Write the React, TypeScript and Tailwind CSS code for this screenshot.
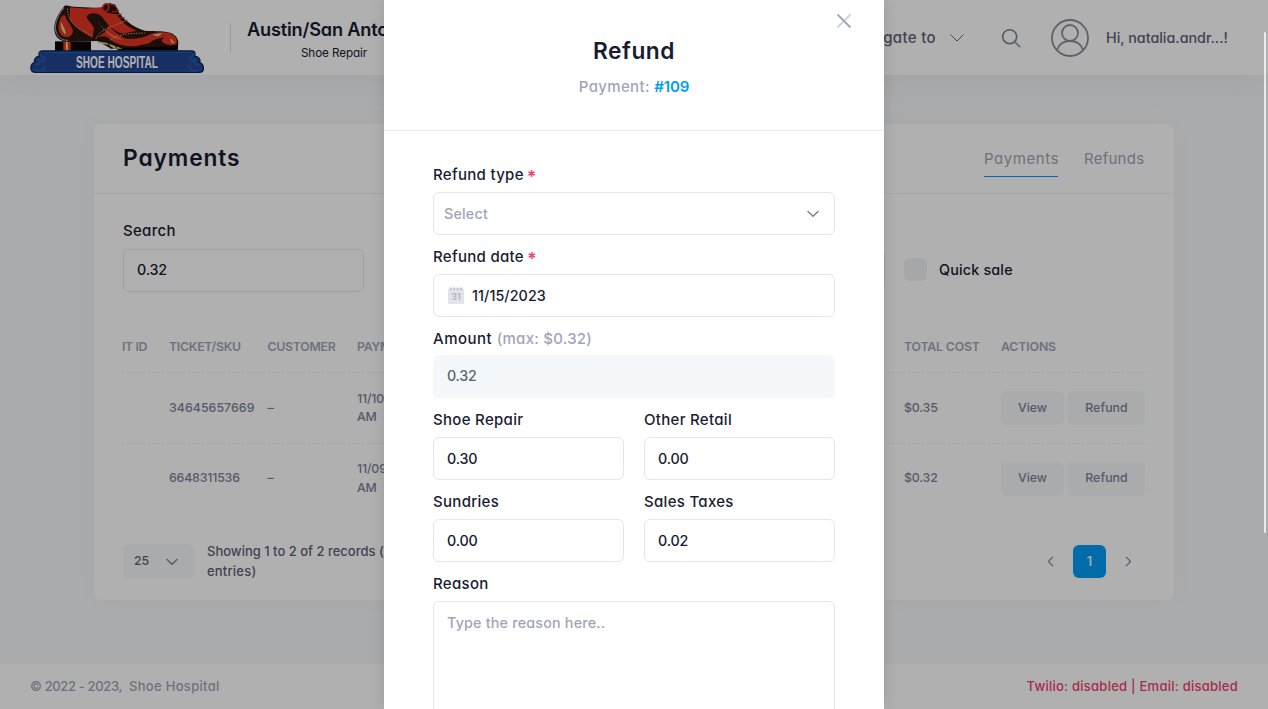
import React from 'react';

type P = { className?: string };

function Chevron({ className = '' }: P) {
  return (
    <svg viewBox="0 0 12 8" className={className} fill="none" stroke="currentColor" strokeLinecap="round" strokeLinejoin="round">
      <path d="M1 1.5 6 6.3 11 1.5" strokeWidth="1.5" />
    </svg>
  );
}

function Logo() {
  return (
    <svg viewBox="0 0 600 240" className="h-20 w-[200px] shrink-0">
      <rect x="105" y="124" width="108" height="30" fill="#0c0706" />
      <rect x="130" y="125" width="22" height="28" fill="#e23424" />
      <rect x="138" y="125" width="5" height="28" fill="#f2e58a" />
      <path d="M300 140 474 134V152H290Z" fill="#0c0706" />
      <path d="M136 16C115 38 99 68 104 96C107 113 120 124 143 125L232 123L274 146L330 143L474 138C478 122 472 106 450 98C420 91 398 94 374 92C346 84 318 66 298 40L286 14L268 9L240 24L160 20Z" fill="#2c150f" />
      <path d="M132 24C108 52 98 86 114 108C124 119 135 121 145 121" fill="none" stroke="#9fa8b5" strokeWidth="3" />
      <path d="M150 22C182 26 214 27 240 22L262 39L290 42C302 64 322 81 350 92L308 101C282 94 262 74 246 50C228 34 202 39 200 52C205 63 216 72 222 84L218 112C196 102 160 80 149 56Z" fill="#e23424" />
      <path d="M128 46C112 66 112 92 124 105C136 117 155 110 159 96C159 78 138 66 136 46Z" fill="#e23424" />
      <path d="M266 76C280 92 296 108 318 116C344 118 362 114 380 108C402 96 430 94 448 100C470 108 474 122 468 133C452 137 440 134 430 128C420 120 428 113 438 113C420 112 398 118 388 130L354 137C320 142 290 134 272 120C256 103 246 110 232 112C250 100 262 94 266 76Z" fill="#e23424" />
      <path d="M230 54C242 82 264 106 308 119C280 116 246 94 230 54Z" fill="#e0c580" />
      <path d="M124 68C130 84 137 92 136 102C128 94 122 82 124 68ZM400 104 424 101 414 108ZM452 117 463 129 455 127Z" fill="#d9dc8a" stroke="#d9dc8a" strokeWidth="2" />
      <path d="M142 26C144 58 160 80 192 94L218 112M228 116C234 98 250 88 304 68L318 62M272 120C286 106 320 100 374 99" fill="none" stroke="#d6b878" strokeWidth="3" strokeDasharray="4 4" />
      <ellipse cx="257" cy="23" rx="9" ry="12" fill="#2c150f" stroke="#e23424" strokeWidth="5" transform="rotate(20 257 23)" />
      <path d="M264 13C276 12 286 18 294 28M276 36 298 32M284 46 306 42M292 56 314 52M304 66 322 60" fill="none" stroke="#e23424" strokeWidth="3" />
      <path d="M230 124 258 128 308 146H284L264 134 232 129Z" fill="#d9d495" />
      <path d="M262 124 272 146M282 130 292 148" stroke="#2c150f" strokeWidth="3" />
      <path d="M66 153H516C526 153 528 166 522 170C534 166 544 180 538 188C552 190 556 217 540 217H44C28 217 30 190 44 188C40 178 50 166 60 170C54 164 56 154 66 153Z" fill="#244592" stroke="#0d2657" strokeWidth="4" />
      <path d="M70 157H512M52 213H532" stroke="#2262b4" strokeWidth="3" />
      <path d="M60 158C56 172 76 166 74 178C70 188 58 182 54 176M44 191C52 200 62 188 56 186M38 208C58 218 76 208 74 196M522 158C526 172 506 166 508 178C512 188 524 182 528 176M538 191C530 200 520 188 526 186M544 208C524 218 506 208 508 196" fill="none" stroke="#2262b4" strokeWidth="4" />
      <text x="168" y="204" textLength="246" lengthAdjust="spacingAndGlyphs" fontFamily="Liberation Sans" fontWeight="700" fontSize="52" fill="#ffffff">SHOE HOSPITAL</text>
    </svg>
  );
}

function Header() {
  return (
    <header className="flex h-[75px] items-start bg-white pl-5 shadow-[0_10px_30px_0_rgba(82,63,105,0.05)]">
      <Logo />
      <div className="ml-[10px] mt-[23px] h-[30px] w-px bg-[#dcdce8]" />
      <div className="ml-4 w-[174px] pt-[18px] text-center">
        <div className="whitespace-nowrap text-left text-[18.2px] font-semibold leading-[22px] tracking-[-0.2px]">Austin/San Antonio</div>
        <div className="mt-[5px] text-[11.7px] leading-4 tracking-[-0.1px]">Shoe Repair</div>
      </div>
      <div className="ml-auto flex h-[75px] items-center text-[#5e6278]">
        <span className="whitespace-nowrap pt-0.5 text-[15px] font-medium tracking-[0.35px]">Navigate to</span>
        <svg viewBox="0 0 14 8" className="ml-[14px] h-2 w-[14px]" fill="none" stroke="currentColor"><path d="M.6.6 7 7 13.4.6" /></svg>
        <svg viewBox="0 0 20 20" className="ml-[37px] h-5 w-5" fill="none" strokeLinecap="round">
          <path d="m14.5 14.5 4 4" stroke="#a1a5b7" strokeWidth="2" />
          <circle cx="8.7" cy="8.7" r="7" stroke="#7e8299" strokeWidth="1.6" />
        </svg>
        <svg viewBox="0 0 38 38" className="ml-[30px] h-[38px] w-[38px]" fill="none" stroke="#8b8b9c" strokeWidth="1.8">
          <circle cx="19" cy="19" r="18" /><circle cx="19" cy="14" r="8" /><path d="M6 31C8 25 13 22 19 22s11 3 13 9" />
        </svg>
        <span className="ml-[17px] mr-10 w-[122px] whitespace-nowrap text-[14.3px] font-medium">Hi, natalia.andr...!</span>
      </div>
    </header>
  );
}

const rows = [
  { ticket: '34645657669', date: '11/10/2023', cost: '$0.35' },
  { ticket: '6648311536', date: '11/09/2023', cost: '$0.32' },
];

function PaymentsCard() {
  return (
    <section className="mx-[94px] mt-[49px] h-[476px] rounded-md bg-white shadow-[0_0_20px_0_rgba(76,87,125,0.04)]">
      <div className="flex h-[70px] items-start border-b border-[#eff2f5] px-[29px]">
        <h1 className="mt-[18px] text-[22.75px] font-semibold leading-8 tracking-[0.9px]">Payments</h1>
        <nav className="ml-auto flex gap-[26px] text-[15px] leading-[22px] text-[#a1a5b7]">
          <a className="mt-6 h-[29px] w-[74px] border-b border-[#009ef7] tracking-[0.55px]">Payments</a>
          <a className="mt-6 w-[61px] tracking-[0.25px]">Refunds</a>
        </nav>
      </div>
      <div className="px-[29px]">
        <div className="grid h-[124px] grid-cols-[241px_241px_241px_1fr] gap-[19.33px] pt-[26px]">
          <div>
            <label className="block text-[15px] font-medium leading-[22px] tracking-[0.3px]">Search</label>
            <div className="mt-[7px] flex h-[43px] items-center rounded-md border border-[#e4e6ef] px-[13px] pb-px text-[14.3px] font-medium tracking-[-0.2px]">0.32</div>
          </div>
          <div className="ml-1 mt-[29px] h-[43px] rounded-md border border-[#e4e6ef]" />
          <div className="mt-[29px] h-[43px] rounded-md border border-[#e4e6ef]" />
          <div className="mt-[38px] flex h-[23px] items-center">
            <span className="h-[23px] w-[23px] rounded-md bg-[#eff2f5]" />
            <span className="ml-3 text-[14.3px] font-medium tracking-[0.2px]">Quick sale</span>
          </div>
        </div>
        <div className="-ml-px grid h-[55px] grid-cols-[47px_98.5px_89.5px_547px_97px_1fr] items-start overflow-hidden border-b border-dashed border-[#eaedf2] pt-5 text-[12.35px] font-semibold leading-[18px] tracking-[-0.3px] text-[#a1a5b7]">
          <span className="tracking-[-0.4px]">IT ID</span><span>TICKET/SKU</span><span>CUSTOMER</span><span>PAYMENT</span><span className="tracking-[-0.2px]">TOTAL COST</span><span className="tracking-[-0.15px]">ACTIONS</span>
        </div>
        {rows.map((r, i) => (
          <div key={r.ticket} className={`-ml-px grid grid-cols-[47px_98.5px_89.5px_547px_97px_1fr] items-center border-dashed border-[#eaedf2] text-[12.35px] font-medium leading-[18.5px] text-[#7e8299] ${i === 0 ? 'h-[71px] border-b' : 'h-[69px]'}`}>
            <span />
            <span className={i === 0 ? 'tracking-[0.05px]' : 'tracking-[-0.18px]'}>{r.ticket}</span>
            <span>–</span>
            <span className="w-[110px] tracking-[-0.15px]">{r.date}<br />AM</span>
            <span className="tracking-[-0.15px]">{r.cost}</span>
            <div className="flex gap-1">
              <button className="h-[34px] w-[63px] rounded-md bg-[#f5f8fa] tracking-[-0.05px]">View</button>
              <button className="h-[34px] w-[77px] rounded-md bg-[#f5f8fa] tracking-[0.05px]">Refund</button>
            </div>
          </div>
        ))}
        <div className="mt-[28px] flex items-start text-[13px] font-medium">
          <div className="mt-[3px] flex h-[35px] w-[71px] items-center justify-between rounded-md bg-[#f5f8fa] pl-[11px] pr-4 text-[#5e6278]">
            <span className="text-[12.35px]">25</span><Chevron className="h-2 w-3 text-[#7e8299]" />
          </div>
          <div className="ml-[13px] w-[250px] leading-5 text-[#5e6278]">Showing 1 to 2 of 2 records (<br /><span className="tracking-[0.2px]">entries)</span></div>
          <div className="ml-auto mt-1 flex h-[33px] items-center text-[#8b8fa3]">
            <Chevron className="h-[7px] w-[11px] rotate-90" />
            <span className="ml-[17px] flex h-[33px] w-[33px] items-center justify-center rounded-md bg-[#009ef7] text-white">1</span>
            <Chevron className="ml-[17px] mr-[11px] h-[7px] w-[11px] -rotate-90" />
          </div>
        </div>
      </div>
    </section>
  );
}

function Label({ children, className = 'h-[39px]' }: { children: React.ReactNode; className?: string }) {
  return <label className={`flex items-center whitespace-pre text-[15px] font-medium tracking-[0.3px] ${className} pt-[5px]`}>{children}</label>;
}

function Required() {
  return <span className="-ml-px pt-1 text-[17px] font-semibold leading-none text-[#f1416c]">*</span>;
}

function Field({ label, value }: { label: string; value: string }) {
  return (
    <div className="w-[191px]">
      <Label>{label}</Label>
      <div className="flex h-[43px] items-center rounded-md border border-[#e4e6ef] px-[13px] text-[14.3px] font-medium tracking-[-0.15px]">{value}</div>
    </div>
  );
}

function RefundModal() {
  return (
    <div className="relative h-[709px] w-[500px] overflow-hidden bg-white">
      <svg viewBox="0 0 14 14" className="absolute left-[453px] top-[14px] h-[14px] w-[14px]" fill="none" strokeWidth="1.8" strokeLinecap="round">
        <path d="M13 1 1 13" stroke="#cfd1dc" /><path d="m1 1 12 12" stroke="#a1a5b7" />
      </svg>
      <div className="h-[131px] border-b border-[#e9ebf0] pt-[35px] text-center">
        <h2 className="text-[22.75px] font-semibold leading-8 tracking-[0.5px]">Refund</h2>
        <p className="mt-[9px] text-[15px] font-medium leading-[22px] tracking-[0.35px] text-[#a1a5b7]">Payment: <span className="font-semibold tracking-[-0.1px] text-[#009ef7]">#109</span></p>
      </div>
      <div className="px-[49px] pt-[22px]">
        <Label>Refund type <Required /></Label>
        <div className="flex h-[43px] items-center justify-between rounded-md border border-[#e4e6ef] pl-[10px] pr-[15px] text-[14.3px] font-medium tracking-[0.2px] text-[#a1a5b7]">
          Select<Chevron className="h-2 w-3 text-[#7e8299]" />
        </div>
        <Label>Refund date <Required /></Label>
        <div className="flex h-[43px] items-center rounded-md border border-[#e4e6ef] pl-[14px] text-[14.3px] font-medium">
          <svg viewBox="0 0 16 17" className="mr-[8px] h-[17px] w-4">
            <rect y="1.5" width="16" height="15.5" rx="1" fill="#e1e2ea" />
            <path d="M3 .5v2.5M6.3.5v2.5M9.6.5v2.5M13 .5v2.5" stroke="#b1b3c2" strokeWidth="1.4" />
            <text x="8" y="13.3" textAnchor="middle" fontFamily="Inter" fontSize="8.8" fontWeight="600" fill="#b1b3c2">31</text>
          </svg>
          <span className="tracking-[0.08px]">11/15/2023</span>
        </div>
        <Label className="h-[38px]"><span className="pt-0.5 tracking-[0.5px]">Amount </span><span className="pt-0.5 tracking-[0.25px] text-[#a1a5b7]">(max: $0.32)</span></Label>
        <div className="flex h-[43px] items-center rounded-md bg-[#f5f8fa] px-[14px] pb-px text-[14.3px] font-medium tracking-[-0.25px] text-[#5e6278]">0.32</div>
        <div className="flex gap-5"><Field label="Shoe Repair" value="0.30" /><Field label="Other Retail" value="0.00" /></div>
        <div className="flex gap-5"><Field label="Sundries" value="0.00" /><Field label="Sales Taxes" value="0.02" /></div>
        <Label>Reason</Label>
        <div className="h-[150px] rounded-md border border-[#e4e6ef] px-[13px] pt-[10px] text-[14.3px] font-medium leading-[22px] tracking-[0.2px] text-[#a1a5b7]">Type the reason here..</div>
      </div>
    </div>
  );
}

export default function App() {
  return (
    <div className="relative h-[709px] w-[1268px] overflow-hidden bg-[#f5f8fa] font-['Inter',sans-serif] text-[#181c32] [font-feature-settings:'cv11']">
      <Header />
      <PaymentsCard />
      <footer className="mt-[64px] flex h-[45px] items-center justify-between bg-white px-[30px] pt-px text-[13px] font-medium text-[#a1a5b7]">
        <span className="flex gap-[7px]"><span className="tracking-[-0.35px]">© 2022 - 2023,</span><span className="tracking-[0.3px]">Shoe Hospital</span></span>
        <span className="tracking-[0.25px] text-[#f1416c]">Twilio: disabled | Email: disabled</span>
      </footer>
      <div className="absolute inset-0 flex justify-center bg-black/31">
        <div className="shadow-[0_0_14px_rgba(0,0,0,0.12)]"><RefundModal /></div>
      </div>
      <div className="absolute left-[1264px] top-8 h-[501px] w-[2px] rounded-full bg-[#e9eaee]" />
    </div>
  );
}
